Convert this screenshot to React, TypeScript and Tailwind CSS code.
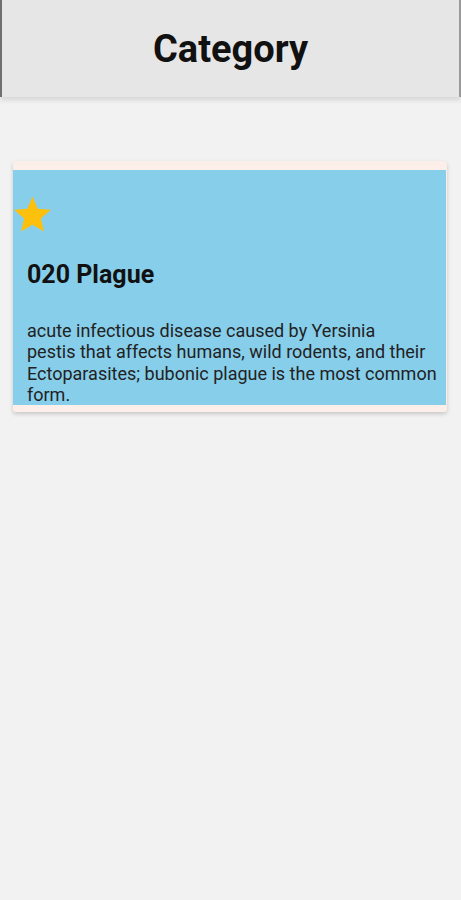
export default function App() {
  return (
    <div
      className="min-h-[900px] bg-[#f2f2f2]"
      style={{ fontFamily: "Roboto, 'Noto Sans', sans-serif" }}
    >
      <header className="h-[97px] flex items-center justify-center bg-[#e6e6e6] border-l-2 border-l-[#6f6f6f] border-r-2 border-r-[#9a9a9a] shadow-[0_3px_5px_rgba(0,0,0,0.12)]">
        <h1 className="text-[38px] font-bold text-[#111] leading-none">
          Category
        </h1>
      </header>

      <main className="pt-[64px] px-[13px]">
        <div className="w-[434px] rounded-[3px] bg-[#fcefe9] pt-[9px] pb-[7px] pr-[1px] shadow-[0_2px_4px_rgba(0,0,0,0.18)]">
          <div className="bg-[#87ceeb]">
            <div className="pt-[26px]">
              <svg
                viewBox="2 2 20 19"
                className="w-[37px] h-[36px] ml-[1px] text-[#fdc10d]"
                fill="currentColor"
              >
                <path d="M12 17.27L18.18 21l-1.64-7.03L22 9.24l-7.19-.61L12 2 9.19 8.63 2 9.24l5.46 4.73L5.82 21z" />
              </svg>
            </div>
            <h2 className="px-[14px] mt-[29px] text-[25px] font-bold text-[#111] leading-[28px]">
              020 Plague
            </h2>
            <p className="pl-[14px] pr-[6px] mt-[31px] text-[18px] leading-[21.3px] text-[#222]">
              acute infectious disease caused by Yersinia
              <br />
              pestis that affects humans, wild rodents, and their Ectoparasites;
              bubonic plague is the most common form.
            </p>
          </div>
        </div>
      </main>
    </div>
  );
}
